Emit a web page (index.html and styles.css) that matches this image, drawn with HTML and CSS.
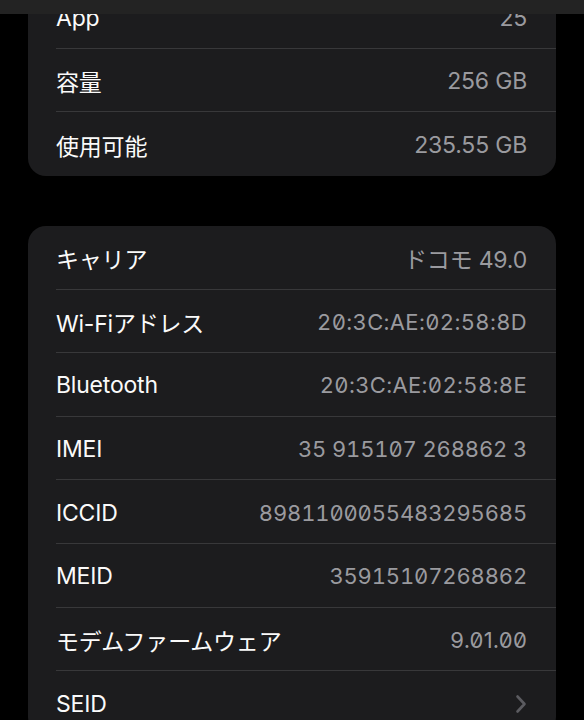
FILE: index.html
```html
<!DOCTYPE html>
<html lang="ja">
<head>
<meta charset="utf-8">
<link rel="stylesheet" href="styles.css">
</head>
<body>
<div class="topbar"></div>
<main class="page">
  <section class="card">
    <div class="row"><span class="label">App</span><span class="value">25</span></div>
    <div class="row"><span class="label">容量</span><span class="value">256 GB</span></div>
    <div class="row"><span class="label">使用可能</span><span class="value">235.55 GB</span></div>
  </section>
  <section class="card">
    <div class="row"><span class="label">キャリア</span><span class="value">ドコモ 49.0</span></div>
    <div class="row"><span class="label">Wi-Fiアドレス</span><span class="value mono mac">20:3C:AE:02:58:8D</span></div>
    <div class="row"><span class="label">Bluetooth</span><span class="value mono mac">20:3C:AE:02:58:8E</span></div>
    <div class="row"><span class="label">IMEI</span><span class="value mono">35 915107 268862 3</span></div>
    <div class="row"><span class="label">ICCID</span><span class="value mono">8981100055483295685</span></div>
    <div class="row"><span class="label">MEID</span><span class="value mono">35915107268862</span></div>
    <div class="row"><span class="label">モデムファームウェア</span><span class="value fw">9.01.00</span></div>
    <div class="row"><span class="label">SEID</span>
      <svg class="chevron" width="12" height="20" viewBox="0 0 12 20"><path d="M2.5 2.5 L9.5 10 L2.5 17.5" fill="none" stroke="#5b5b60" stroke-width="2.6" stroke-linecap="round" stroke-linejoin="round"/></svg>
    </div>
  </section>
</main>
</body>
</html>
```

FILE: styles.css
```css
html, body {
  margin: 0;
  padding: 0;
  background: #000;
  overflow: hidden;
}
body {
  font-family: Inter, "Noto Sans CJK JP", sans-serif;
  color: #fff;
  -webkit-font-smoothing: antialiased;
}
.topbar {
  position: fixed;
  top: 0;
  left: 0;
  right: 0;
  height: 14px;
  background: #232323;
  z-index: 2;
}
.page {
  margin-top: -14.8px;
  padding: 0 28px;
  display: flex;
  flex-direction: column;
  gap: 50px;
}
.card {
  background: #1c1c1e;
  border-radius: 18px;
  padding-left: 28px;
  overflow: hidden;
}
.row {
  box-sizing: border-box;
  height: 63.6px;
  display: flex;
  align-items: center;
  justify-content: space-between;
  padding: 2px 29px 0 0;
  border-bottom: 1px solid #38383a;
}
.row:last-child {
  border-bottom: none;
}
.label {
  font-size: 23px;
  font-weight: 400;
  color: #fafafa;
  letter-spacing: -0.2px;
}
.value {
  font-size: 23px;
  color: #9a9a9f;
  letter-spacing: -0.2px;
}
.mono {
  font-size: 22px;
  font-variant-numeric: tabular-nums slashed-zero;
  font-feature-settings: "tnum" 1, "zero" 1;
  letter-spacing: -0.15px;
}
.mac {
  letter-spacing: 0.35px;
}
.fw {
  font-size: 22px;
  font-feature-settings: "zero" 1;
  letter-spacing: 0.2px;
}
.chevron {
  display: block;
}
```
